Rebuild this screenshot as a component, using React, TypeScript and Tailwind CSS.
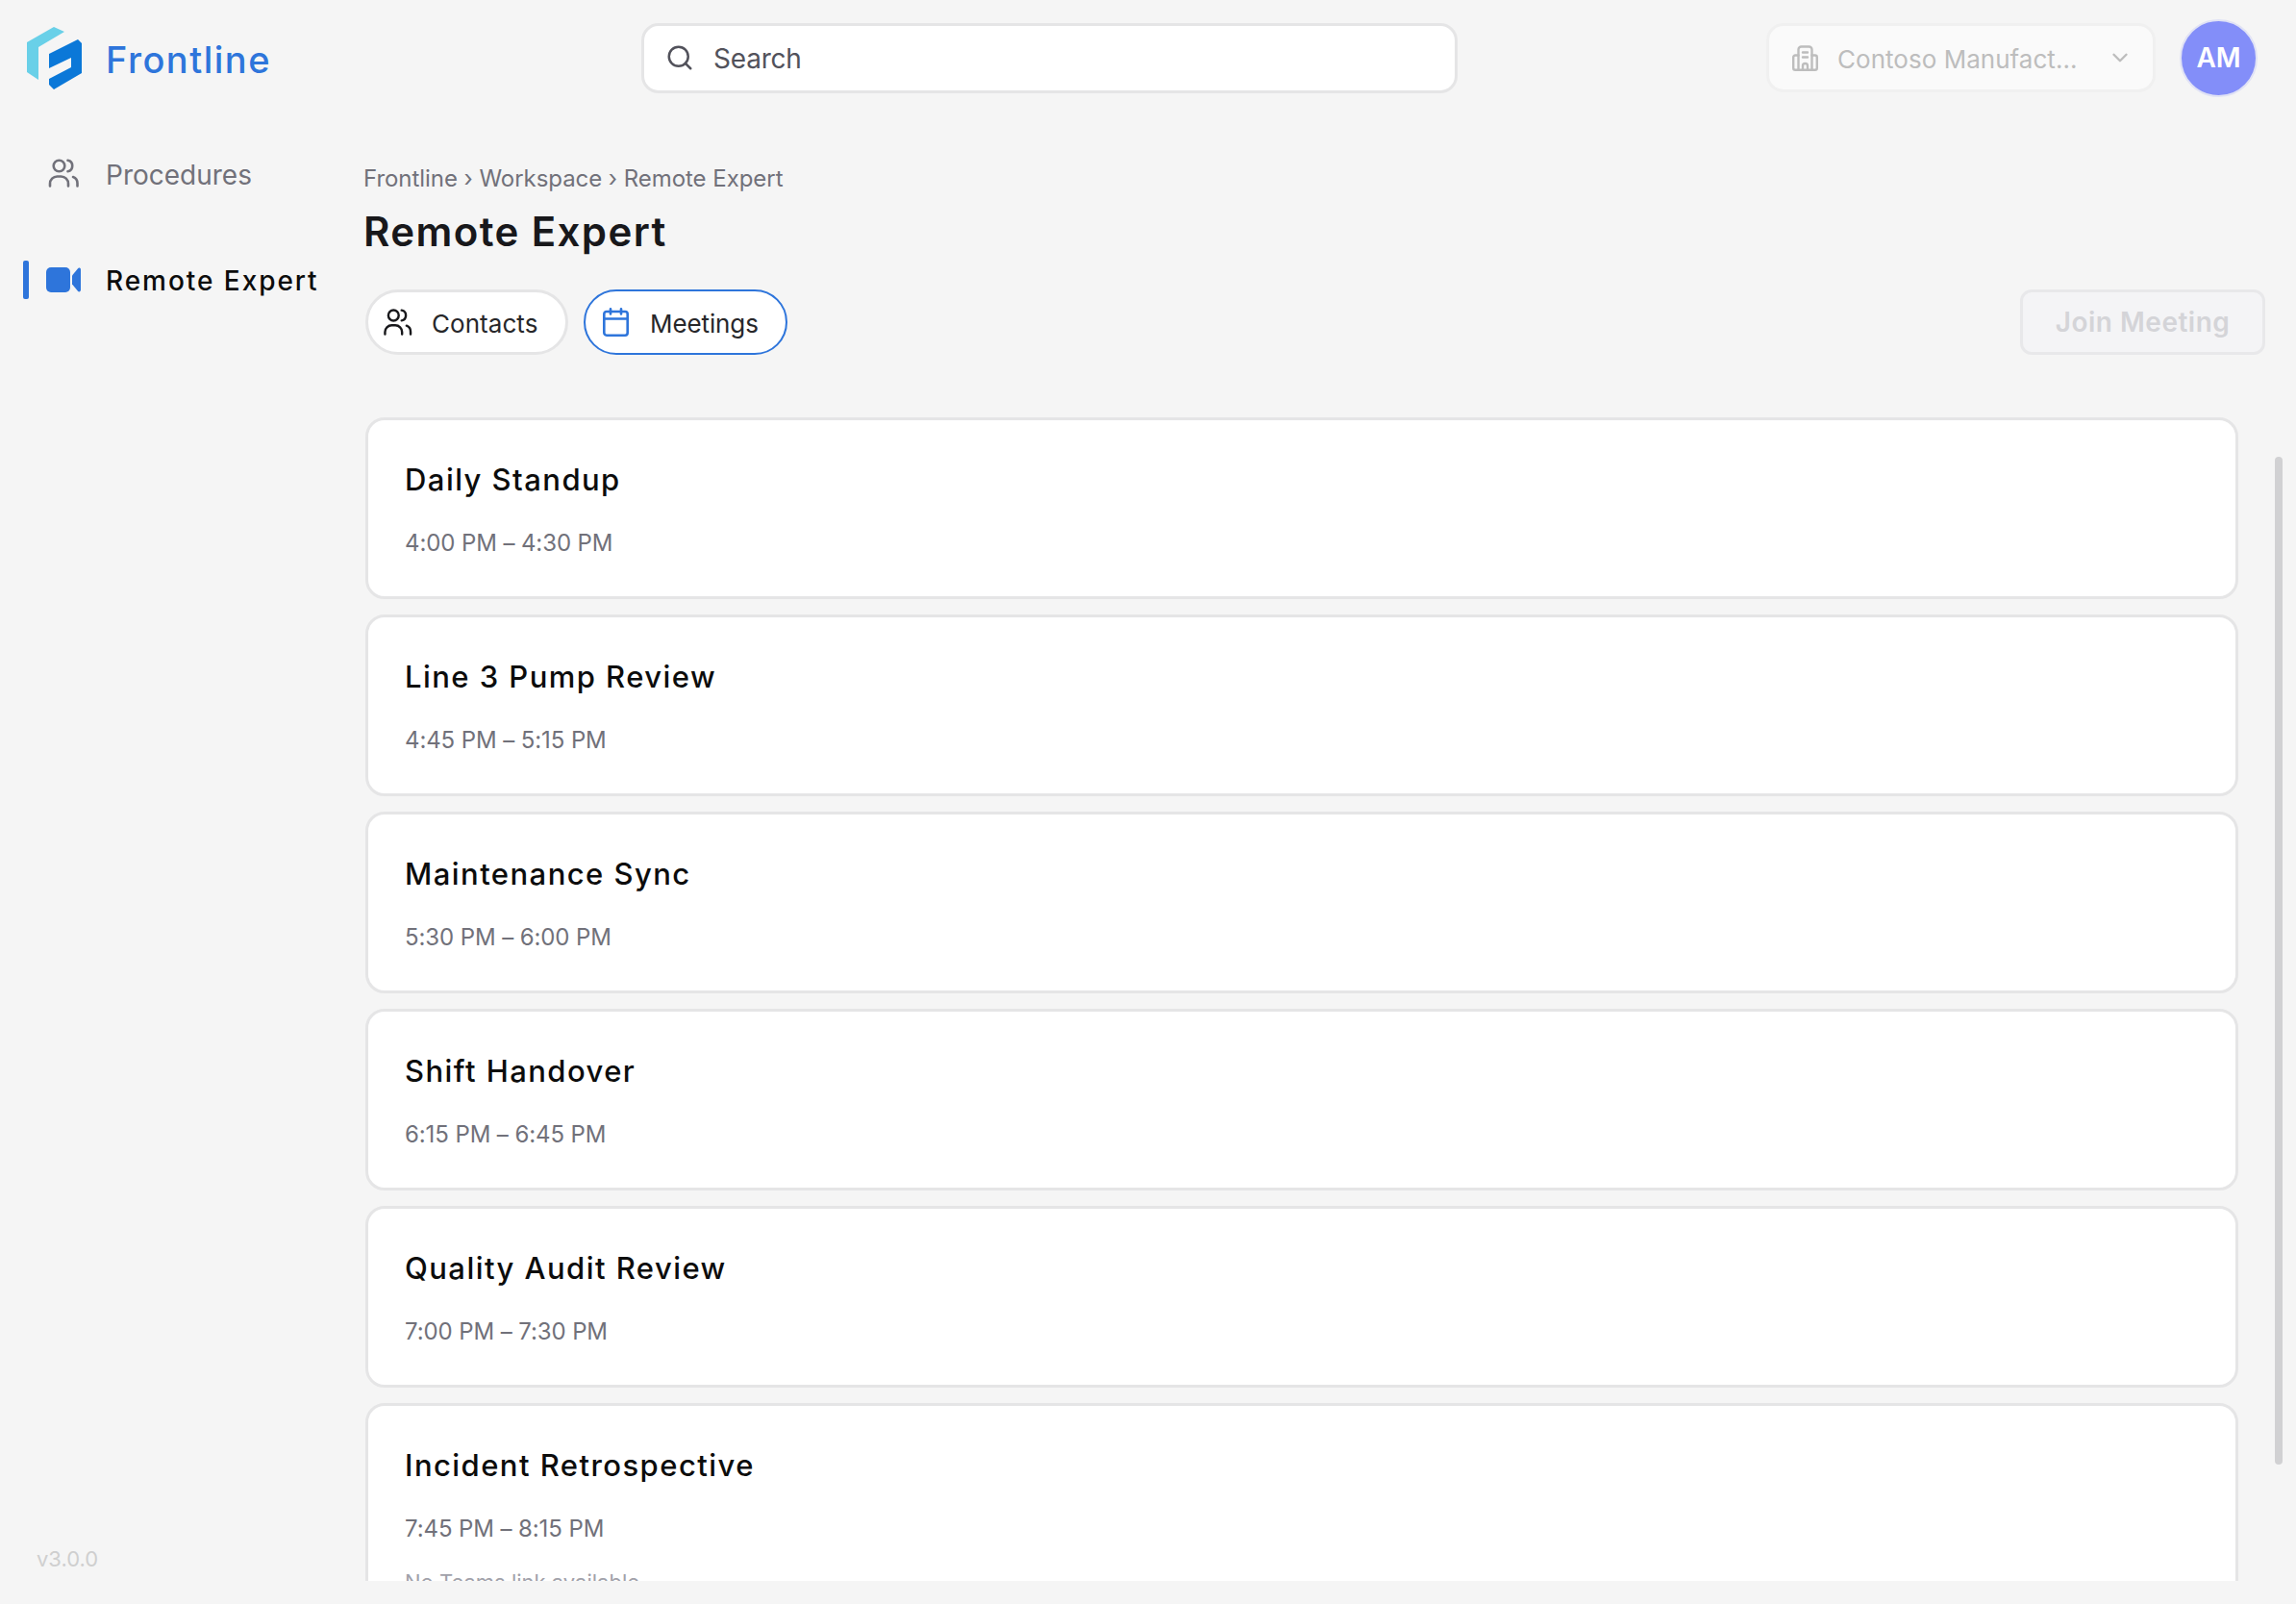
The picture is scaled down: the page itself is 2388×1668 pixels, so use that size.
import { ChevronDown, Search } from "lucide-react"

const meetings = [
    { title: "Daily Standup", time: "4:00 PM – 4:30 PM" },
    { title: "Line 3 Pump Review", time: "4:45 PM – 5:15 PM" },
    { title: "Maintenance Sync", time: "5:30 PM – 6:00 PM" },
    { title: "Shift Handover", time: "6:15 PM – 6:45 PM" },
    { title: "Quality Audit Review", time: "7:00 PM – 7:30 PM" },
    { title: "Incident Retrospective", time: "7:45 PM – 8:15 PM", note: "No Teams link available" },
]

function Logo() {
    return (
        <svg viewBox="0 0 57 65" className="w-[57px] h-[65px] shrink-0">
            <path d="M0 16L28 0L39 5L12 21V55L0 47Z" fill="#69d0e8" />
            <path d="M23 28L53 13L57 17V48L28 65L23 60V54L46 42V32L23 43Z" fill="#0b78d8" />
        </svg>
    )
}

function PeopleIcon({ className }: { className: string }) {
    return (
        <svg viewBox="0 0 32 30" fill="none" stroke="currentColor" strokeWidth="2.6" strokeLinecap="round" className={className}>
            <circle cx="11.5" cy="7.5" r="5.8" />
            <path d="M2 28.5V26a7.5 7.5 0 0 1 7.5-7.5h4a7.5 7.5 0 0 1 7.5 7.5v2.5" />
            <path d="M20.5 1.8a5.8 5.8 0 0 1 0 11.4" />
            <path d="M26 19a7 7 0 0 1 4.5 6.6v2.9" />
        </svg>
    )
}

function CalendarIcon() {
    return (
        <svg viewBox="0 0 27 30" fill="none" stroke="#2e75db" strokeWidth="2.6" strokeLinecap="round" className="w-[27px] h-[30px] shrink-0">
            <rect x="1.3" y="4" width="24.4" height="24.7" rx="2.6" />
            <path d="M1.3 11.5H25.7M8 1.3V6.5M19 1.3V6.5" />
        </svg>
    )
}

function VideoIcon() {
    return (
        <svg viewBox="0 0 36 26" fill="#2e75db" className="w-[36px] h-[26px] shrink-0">
            <rect x="0" y="0" width="25" height="26" rx="5" />
            <path d="M27 8.5L33 1.2C34 0 36 .7 36 2.4V23.6C36 25.3 34 26 33 24.8L27 17.5Z" />
        </svg>
    )
}

function BuildingIcon() {
    return (
        <svg viewBox="0 0 27 27" fill="none" stroke="#bdbdbd" strokeWidth="2.4" strokeLinejoin="round" strokeLinecap="round" className="w-[27px] h-[27px] shrink-0">
            <path d="M6.5 25.8V4.5a3 3 0 0 1 3-3h8a3 3 0 0 1 3 3v21.3" />
            <path d="M6.5 10.5H3.2a2 2 0 0 0-2 2v11.3a2 2 0 0 0 2 2h20.6a2 2 0 0 0 2-2V12.5a2 2 0 0 0-2-2h-3.3" />
            <path d="M11 7.5h5M11 12.5h5M11 25.8v-4.3a2.5 2.5 0 0 1 5 0v4.3" />
        </svg>
    )
}

function MeetingCard({ title, time, note }: { title: string; time: string; note?: string }) {
    return (
        <div className={`shrink-0 mb-[16px] rounded-[20px] border-[3px] border-[#e5e5e6] bg-white pl-[38px] pt-[43px] ${note ? "h-[300px]" : "h-[189px]"}`}>
            <div className="text-[31px] leading-[38px] font-[550] tracking-[1.45px] text-[#0c0c0c]">{title}</div>
            <div className="mt-[31px] text-[24px] leading-[32px] tracking-[-0.1px] text-[#71717a]">{time}</div>
            {note && <div className="mt-[25px] text-[22px] leading-[28px] text-[#a1a1aa]">{note}</div>}
        </div>
    )
}

export default function App() {
    return (
        <div className="h-screen w-full flex flex-col overflow-hidden bg-[#f5f5f5] font-['Inter',sans-serif]">
            <header className="h-[120px] shrink-0 flex items-center">
                <div className="w-[667px] shrink-0 flex items-center pl-[28px] gap-[25px]">
                    <Logo />
                    <span className="pt-[4px] text-[38px] font-[550] tracking-[1.5px] text-[#2e75db]">Frontline</span>
                </div>
                <div className="w-[849px] h-[73px] shrink-0 flex items-center gap-[20px] rounded-[18px] border-[3px] border-[#e5e5e6] bg-white pl-[22px]">
                    <Search size={30} strokeWidth={2} className="text-[#52525b]" />
                    <span className="pt-[2px] text-[28px] tracking-[-0.2px] text-[#52525b]">Search</span>
                </div>
                <div className="ml-auto w-[405px] h-[72px] flex items-center rounded-[18px] border-[3px] border-[#f0f0f0] bg-[#fafafa] pl-[24px] pr-[21px]">
                    <BuildingIcon />
                    <span className="ml-[20px] pt-[2px] text-[26px] tracking-[0.03px] text-[#bdbdbd]">Contoso Manufact...</span>
                    <ChevronDown size={26} strokeWidth={2.2} className="ml-auto text-[#bdbdbd]" />
                </div>
                <div className="ml-[25px] mr-[40px] w-[81px] h-[81px] flex items-center justify-center rounded-full border-[2px] border-[#e0e2f5] bg-[#838ef9] text-[28px] font-semibold text-white">AM</div>
            </header>

            <div className="flex-1 min-h-0 flex">
                <aside className="w-[378px] shrink-0 flex flex-col pt-[30px] pb-[30px]">
                    <div className="h-[60px] flex items-center pl-[50px]">
                        <PeopleIcon className="w-[32px] h-[30px] shrink-0 text-[#71717a]" />
                        <span className="ml-[28px] pt-[3px] text-[28px] text-[#71717a]">Procedures</span>
                    </div>
                    <div className="mt-[51px] h-[60px] flex items-center pl-[24px]">
                        <div className="w-[6px] h-[40px] rounded-[2px] bg-[#2e75db]" />
                        <div className="ml-[18px]"><VideoIcon /></div>
                        <span className="ml-[26px] pt-[2px] text-[28px] font-[550] tracking-[1.95px] text-[#0c0c0c]">Remote Expert</span>
                    </div>
                    <div className="mt-auto pl-[38px] text-[22px] text-[#cfcfcf]">v3.0.0</div>
                </aside>

                <main className="flex-1 min-w-0 flex flex-col">
                    <div className="mt-[51px] text-[24px] leading-[30px] tracking-[-0.05px] text-[#71717a]">Frontline › Workspace › Remote Expert</div>
                    <h1 className="mt-[15px] text-[42px] leading-[50px] font-semibold tracking-[1.4px] text-[#18181b]">Remote Expert</h1>
                    <div className="mt-[35px] ml-[2px] mr-[32px] flex items-center">
                        <div className="h-[68px] w-[211px] flex items-center rounded-full border-[3px] border-[#e5e5e6] bg-white pl-[15px]">
                            <PeopleIcon className="w-[31px] h-[28px] shrink-0 text-[#18181b]" />
                            <span className="ml-[20px] pt-[2px] text-[26px] tracking-[0.05px] text-[#27272a]">Contacts</span>
                        </div>
                        <div className="ml-[16px] h-[68px] w-[212px] flex items-center rounded-full border-[2px] border-[#2e75db] bg-white pl-[18px]">
                            <CalendarIcon />
                            <span className="ml-[22px] pt-[2px] text-[26px] tracking-[-0.1px] text-[#27272a]">Meetings</span>
                        </div>
                        <div className="ml-auto h-[68px] w-[255px] flex items-center justify-center rounded-[12px] border-[3px] border-[#e8e8ea] bg-[#f4f4f6] text-[28px] font-semibold tracking-[0.5px] text-[#d4d4d8]">Join Meeting</div>
                    </div>
                    <div className="mt-[65px] ml-[2px] flex-1 min-h-0 mb-[24px] flex">
                        <div className="w-[1948px] shrink-0 flex flex-col overflow-hidden">
                            {meetings.map((m) => (
                                <MeetingCard key={m.title} title={m.title} time={m.time} note={m.note} />
                            ))}
                        </div>
                        <div className="ml-[38px] mt-[41px] w-[8px] h-[1048px] rounded-full bg-[#d1d1d3]" />
                    </div>
                </main>
            </div>
        </div>
    )
}
